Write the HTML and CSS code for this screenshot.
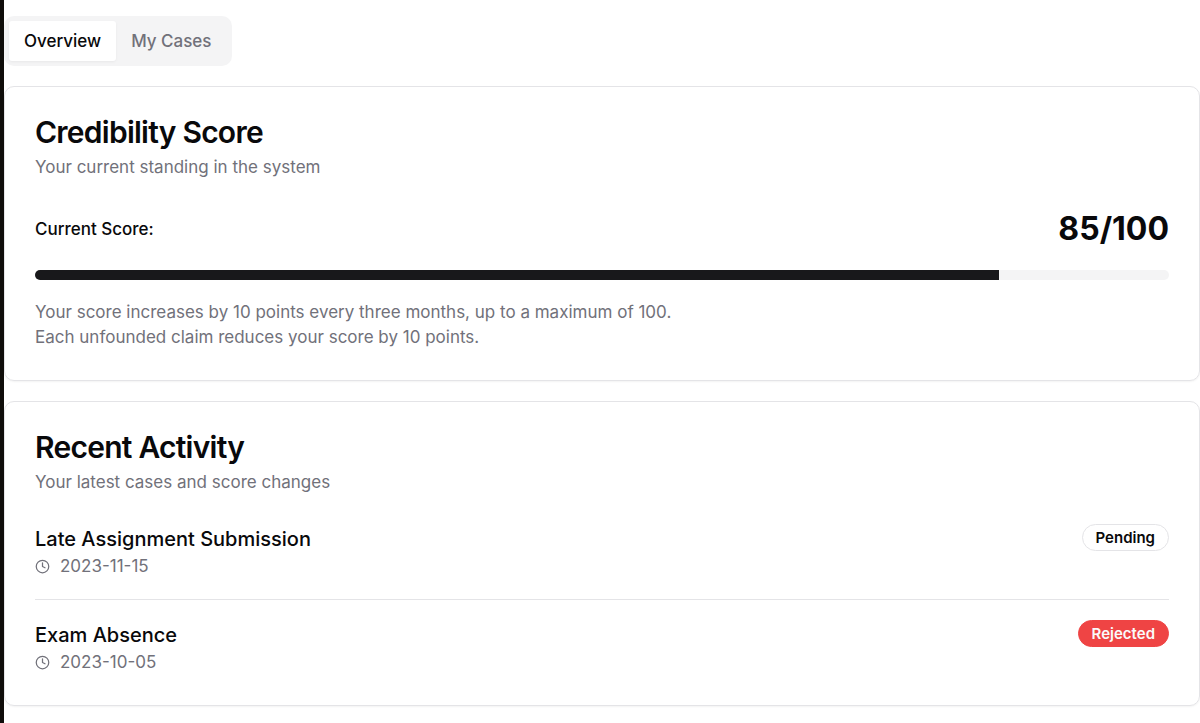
FILE: index.html
```html
<!DOCTYPE html>
<html lang="en">
	<head>
		<meta charset="utf-8">
		<meta name="viewport" content="width=device-width, initial-scale=1.0">
		<title>Credibility Score</title>
		<link rel="stylesheet" href="styles.css">
	</head>
	<body>
		<main class="dashboard">
			<div class="tabs" role="tablist">
				<button type="button" class="tab active" role="tab" aria-selected="true">Overview</button>
				<button type="button" class="tab" role="tab" aria-selected="false">My Cases</button>
			</div>

			<section class="card">
				<h2>Credibility Score</h2>
				<p class="desc">Your current standing in the system</p>
				<div class="score">
					<span class="score-label" id="score-label">Current Score:</span>
					<span class="score-value">85/100</span>
				</div>
				<div class="progress" role="progressbar" aria-labelledby="score-label" aria-valuenow="85" aria-valuemin="0" aria-valuemax="100">
					<div class="bar" style="width: 85%"></div>
				</div>
				<p class="note">Your score increases by 10 points every three months, up to a maximum of 100.<br>Each unfounded claim reduces your score by 10 points.</p>
			</section>

			<section class="card">
				<h2>Recent Activity</h2>
				<p class="desc">Your latest cases and score changes</p>
				<ul class="cases">
					<li>
						<div>
							<h3>Late Assignment Submission</h3>
							<p class="date">
								<svg class="clock" viewBox="0 0 24 24"><circle cx="12" cy="12" r="10"/><path d="M12 6v6l4 2"/></svg>
								<time datetime="2023-11-15">2023-11-15</time>
							</p>
						</div>
						<span class="badge">Pending</span>
					</li>
					<li>
						<div>
							<h3>Exam Absence</h3>
							<p class="date">
								<svg class="clock" viewBox="0 0 24 24"><circle cx="12" cy="12" r="10"/><path d="M12 6v6l4 2"/></svg>
								<time datetime="2023-10-05">2023-10-05</time>
							</p>
						</div>
						<span class="badge rejected">Rejected</span>
					</li>
				</ul>
			</section>
		</main>
	</body>
</html>
```
FILE: styles.css
```css
*{
	box-sizing: border-box;
	margin: 0;
	padding: 0;
}
body{
	min-height: 100vh;
	border-left: 4px solid #0f0d0a;
	background: #fff;
	color: #09090b;
	font-family: Inter, "Liberation Sans", sans-serif;
	font-size: 17px;
	line-height: 25px;
}
.dashboard{
	display: flex;
	flex-direction: column;
	gap: 20px;
	padding: 16px 0;
}

/* tabs */
.tabs{
	display: flex;
	align-self: flex-start;
	padding: 5px;
	border-radius: 10px;
	background: #f4f4f5;
}
.tab{
	padding: 8px 15px;
	border: 0;
	border-radius: 3px;
	background: none;
	color: #71717a;
	font: inherit;
	font-weight: 500;
	line-height: 24px;
	cursor: pointer;
}
.tab.active{
	background: #fff;
	color: #09090b;
	box-shadow: 0 1px 3px rgba(0,0,0,.05);
}

/* cards */
.card{
	padding: 30px;
	border: 1px solid #e4e4e7;
	border-radius: 10px;
	box-shadow: 0 1px 2px rgba(0,0,0,.05);
}
.card h2{
	font-size: 30px;
	font-weight: 600;
	line-height: 30px;
	letter-spacing: -0.025em;
}
.desc{
	margin: 8px 0 29px;
	color: #71717a;
}

/* score */
.score{
	display: flex;
	justify-content: space-between;
	align-items: center;
}
.score-label{
	font-weight: 500;
}
.score-value{
	font-size: 32px;
	font-weight: 700;
	line-height: 40px;
}
.progress{
	height: 10px;
	margin: 21px 0 20px;
	overflow: hidden;
	border-radius: 5px;
	background: #f4f4f5;
}
.bar{
	height: 100%;
	background: #18181b;
}
.note{
	color: #71717a;
}

/* recent cases */
.cases{
	list-style: none;
}
.cases li{
	display: flex;
	justify-content: space-between;
	align-items: flex-start;
}
.cases li + li{
	margin-top: 20px;
	padding-top: 20px;
	border-top: 1px solid #e4e4e7;
}
.cases h3{
	font-size: 20px;
	font-weight: 500;
	line-height: 30px;
}
.date{
	display: flex;
	align-items: center;
	gap: 10px;
	color: #71717a;
}
.clock{
	width: 15px;
	height: 15px;
	fill: none;
	stroke: currentColor;
	stroke-width: 2;
	stroke-linecap: round;
	stroke-linejoin: round;
}
.badge{
	padding: 2px 13px;
	border: 1px solid #e4e4e7;
	border-radius: 14px;
	font-size: 15px;
	font-weight: 600;
	line-height: 21px;
}
.badge.rejected{
	border-color: #ef4444;
	background: #ef4444;
	color: #fafafa;
}
```
